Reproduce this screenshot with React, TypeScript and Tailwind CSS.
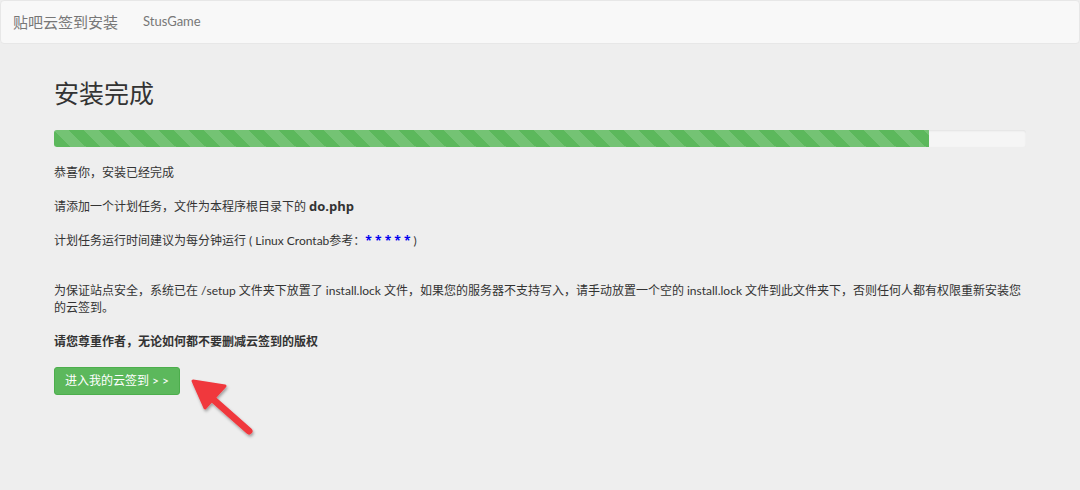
import React from "react";

const font = { fontFamily: 'Lato, "Noto Sans CJK SC", sans-serif' };
const open = { fontFamily: '"Open Sans", "Noto Sans CJK SC", sans-serif' };

export default function App() {
  return (
    <div className="relative w-[1080px] h-[490px] bg-[#eeeeee] text-[#333] overflow-hidden" style={font}>
      {/* Navbar */}
      <div className="h-[44px] bg-[#f8f8f8] border border-[#e7e7e7] rounded-[4px] flex items-center">
        <span className="ml-[12px] text-[15px] text-[#777]">贴吧云签到安装</span>
        <span className="ml-[25px] text-[13px] text-[#777]">StusGame</span>
      </div>

      <div className="px-[54px] pt-[33px]">
        <h1 className="text-[25px] leading-[32px] text-[#333] font-normal">安装完成</h1>

        {/* Progress */}
        <div className="mt-[21px] h-[17px] bg-[#f5f5f5] rounded-[3px] overflow-hidden shadow-[inset_0_1px_2px_rgba(0,0,0,0.08)]">
          <div
            className="h-full w-[90%] bg-[#5cb85c] bg-[length:30px_30px] bg-[linear-gradient(45deg,rgba(255,255,255,0.15)_25%,transparent_25%,transparent_50%,rgba(255,255,255,0.15)_50%,rgba(255,255,255,0.15)_75%,transparent_75%,transparent)]"
          />
        </div>

        <div className="mt-[17px] text-[12px] leading-[17px]">
          <p>恭喜你，安装已经完成</p>
          <p className="mt-[17px]">
            请添加一个计划任务，文件为本程序根目录下的 <b className="text-[13px]" style={open}>do.php</b>
          </p>
          <p className="mt-[17px]">
            计划任务运行时间建议为每分钟运行 ( Linux Crontab参考：
            <span className="text-[#0000ee] font-bold" style={open}>* * * * *</span> )
          </p>
          <p className="mt-[33px]">
            为保证站点安全，系统已在 /setup 文件夹下放置了 install.lock 文件，如果您的服务器不支持写入，请手动放置一个空的 install.lock 文件到此文件夹下，否则任何人都有权限重新安装您的云签到。
          </p>
          <p className="mt-[17px] font-bold">请您尊重作者，无论如何都不要删减云签到的版权</p>
        </div>

        <button className="mt-[17px] h-[28px] w-[126px] bg-[#5cb85c] border border-[#4cae4c] rounded-[3px] text-white text-[12px] flex items-center justify-center">
          进入我的云签到 &gt; &gt;
        </button>
      </div>

      {/* Arrow annotation */}
      <svg className="absolute left-[185px] top-[372px]" width="80" height="75" viewBox="0 0 80 75">
        <defs>
          <filter id="sh" x="-20%" y="-20%" width="140%" height="140%">
            <feDropShadow dx="1" dy="2" stdDeviation="1.5" floodColor="#000" floodOpacity="0.35" />
          </filter>
        </defs>
        <g filter="url(#sh)">
          <line x1="64" y1="59" x2="30" y2="29" stroke="#f0383e" strokeWidth="7" strokeLinecap="round" />
          <polygon points="8,9 40,14 20,36" fill="#f0383e" stroke="#f0383e" strokeWidth="3" strokeLinejoin="round" />
        </g>
      </svg>
    </div>
  );
}
